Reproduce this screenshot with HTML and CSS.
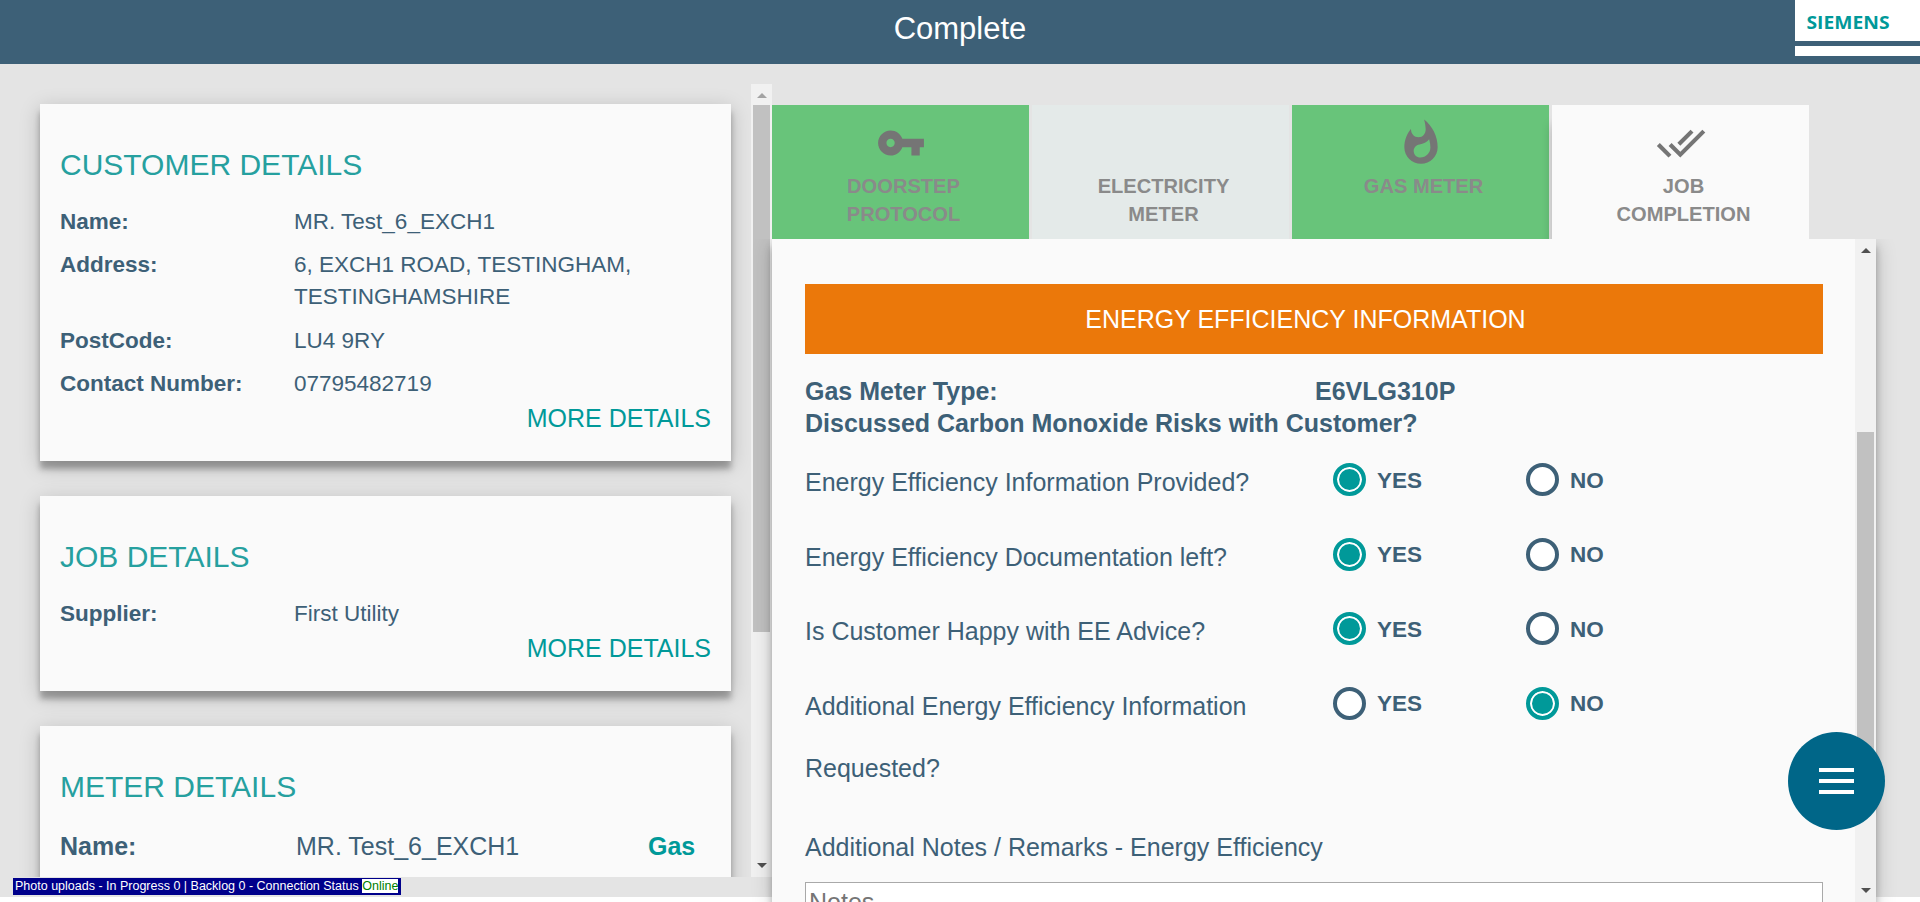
FILE: index.html
```html
<!DOCTYPE html>
<html lang="en">
<head>
<meta charset="utf-8">
<title>Complete</title>
<link rel="stylesheet" href="styles.css">
</head>
<body>
<header class="topbar">
  <h1 class="topbar-title">Complete</h1>
  <div class="brand">
    <div class="brand-name"><svg width="125" height="41" viewBox="0 0 125 41"><text class="brand-text" x="11.5" y="28.5" textLength="83" lengthAdjust="spacingAndGlyphs">SIEMENS</text></svg></div>
    <div class="brand-line"></div>
  </div>
</header>
<main class="workspace">
  <div class="left-pane">
    <div class="cards">
      <section class="card">
        <h2 class="card-title">CUSTOMER DETAILS</h2>
        <dl class="facts">
          <dt>Name:</dt><dd>MR. Test_6_EXCH1</dd>
          <dt>Address:</dt><dd>6, EXCH1 ROAD, TESTINGHAM, TESTINGHAMSHIRE</dd>
          <dt>PostCode:</dt><dd>LU4 9RY</dd>
          <dt>Contact Number:</dt><dd>07795482719</dd>
        </dl>
        <a class="more">MORE DETAILS</a>
      </section>
      <section class="card">
        <h2 class="card-title">JOB DETAILS</h2>
        <dl class="facts">
          <dt>Supplier:</dt><dd>First Utility</dd>
        </dl>
        <a class="more">MORE DETAILS</a>
      </section>
      <section class="card">
        <h2 class="card-title">METER DETAILS</h2>
        <div class="meter-row"><b>Name:</b><span>MR. Test_6_EXCH1</span><b class="fuel">Gas</b></div>
      </section>
    </div>
    <div class="scrollbar">
      <i class="arrow arrow-up arrow-muted"></i>
      <div class="thumb thumb-left"></div>
      <i class="arrow arrow-down"></i>
    </div>
  </div>
  <div class="right-pane">
    <nav class="tabs">
      <a class="tab tab-done">
        <svg class="tab-icon" viewBox="0 0 24 24"><path d="M12.65 10C11.83 7.67 9.61 6 7 6c-3.31 0-6 2.69-6 6s2.69 6 6 6c2.61 0 4.83-1.67 5.65-4H17v4h4v-4h2v-4H12.65zM7 14c-1.1 0-2-.9-2-2s.9-2 2-2 2 .9 2 2-.9 2-2 2z"/></svg>
        <span class="tab-label">DOORSTEP<br>PROTOCOL</span>
      </a>
      <a class="tab tab-off">
        <span class="tab-icon"></span>
        <span class="tab-label">ELECTRICITY<br>METER</span>
      </a>
      <a class="tab tab-done">
        <svg class="tab-icon" viewBox="0 0 24 24"><path d="M13.5.67s.74 2.65.74 4.8c0 2.06-1.35 3.73-3.41 3.73-2.07 0-3.63-1.67-3.63-3.73l.03-.36C5.21 7.51 4 10.62 4 14c0 4.42 3.58 8 8 8s8-3.58 8-8C20 8.61 17.41 3.8 13.5.67zM11.71 19c-1.78 0-3.22-1.4-3.22-3.14 0-1.62 1.05-2.76 2.81-3.12 1.77-.36 3.6-1.21 4.62-2.58.39 1.29.59 2.65.59 4.04 0 2.65-2.15 4.8-4.8 4.8z"/></svg>
        <span class="tab-label">GAS METER</span>
      </a>
      <a class="tab tab-current">
        <svg class="tab-icon" viewBox="0 0 24 24"><path d="M18 7l-1.41-1.41-6.34 6.34 1.41 1.41L18 7zm4.24-1.41L11.66 16.17 7.48 12l-1.41 1.41L11.66 19l12-12-1.42-1.41zM.41 13.41L6 19l1.41-1.41L1.83 12 .41 13.41z"/></svg>
        <span class="tab-label">JOB<br>COMPLETION</span>
      </a>
    </nav>
    <section class="panel">
      <div class="panel-body">
        <h2 class="banner">ENERGY EFFICIENCY INFORMATION</h2>
        <div class="meter-type"><span>Gas Meter Type:</span><span>E6VLG310P</span></div>
        <p class="subhead">Discussed Carbon Monoxide Risks with Customer?</p>
        <div class="question"><span>Energy Efficiency Information Provided?</span><span class="choice"><i class="radio radio-on"></i><b>YES</b></span><span class="choice"><i class="radio"></i><b>NO</b></span></div>
        <div class="question"><span>Energy Efficiency Documentation left?</span><span class="choice"><i class="radio radio-on"></i><b>YES</b></span><span class="choice"><i class="radio"></i><b>NO</b></span></div>
        <div class="question"><span>Is Customer Happy with EE Advice?</span><span class="choice"><i class="radio radio-on"></i><b>YES</b></span><span class="choice"><i class="radio"></i><b>NO</b></span></div>
        <div class="question question-tall"><span>Additional Energy Efficiency Information Requested?</span><span class="choice"><i class="radio"></i><b>YES</b></span><span class="choice"><i class="radio radio-on"></i><b>NO</b></span></div>
        <p class="notes-label">Additional Notes / Remarks - Energy Efficiency</p>
        <div class="notes">Notes</div>
      </div>
      <div class="scrollbar">
        <i class="arrow arrow-up"></i>
        <div class="thumb thumb-right"></div>
        <i class="arrow arrow-down"></i>
      </div>
    </section>
  </div>
</main>
<div class="status">Photo uploads - In Progress 0 | Backlog 0 - Connection Status <span class="online">Online</span></div>
<button class="fab" aria-label="Menu"><i></i><i></i><i></i></button>
</body>
</html>
```
FILE: styles.css
```css
* { box-sizing: border-box; }
body {
  margin: 0;
  height: 902px;
  overflow: hidden;
  background: #fff;
  color: #3d6077;
  font-family: "Liberation Sans", Arial, sans-serif;
  font-size: 22.5px;
}
h1, h2, p, dl, dd { margin: 0; font-weight: 400; }

.topbar {
  display: flex;
  justify-content: flex-end;
  height: 64px;
  padding-left: 125px;
  background: #3d6077;
}
.topbar-title { flex: 1; color: #fff; font-size: 31px; line-height: 57px; text-align: center; }
.brand { width: 125px; height: 56px; background: #fff; }
.brand-name { height: 41px; }
.brand-name svg { display: block; }
.brand-text { font-family: "Open Sans", "Noto Sans", sans-serif; font-weight: 700; font-size: 18px; fill: #099; }
.brand-line { height: 5px; background: #3d6077; }

.workspace { display: flex; height: 833px; background: #e4e4e4; }

.left-pane { display: flex; width: 772px; height: 813px; padding-top: 20px; }
.cards {
  display: flex;
  flex-direction: column;
  gap: 35px;
  width: 751px;
  padding: 20px 20px 0 40px;
  overflow: hidden;
}
.card {
  flex: none;
  padding: 43px 20px 26px;
  background: #fafafa;
  box-shadow: 0 8px 6px 0 rgba(0,0,0,.28), 0 5px 20px rgba(0,0,0,.2);
}
.card-title { height: 53px; color: #26a09f; font-size: 30px; line-height: 36px; }
.facts { display: grid; grid-template-columns: 234px 370px; row-gap: 11.33px; padding-top: 6px; line-height: 32px; }
.facts dt { font-weight: 700; }
.more { display: block; height: 33px; margin-top: 2px; color: #099; font-size: 25px; line-height: 33px; text-align: right; }
.meter-row { display: grid; grid-template-columns: 236px 352px auto; padding: 8px 0 40px; font-size: 25px; line-height: 32px; }
.fuel { color: #099; }

.scrollbar { display: flex; flex-direction: column; align-items: center; width: 21px; background: #f1f1f1; }
.arrow { width: 0; height: 0; border: 5px solid transparent; }
.arrow-up { margin: 4px 0 7px; border-bottom-color: #505050; }
.arrow-down { margin: auto 0 4px; border-top-color: #505050; }
.arrow-muted { border-bottom-color: #a3a3a3; }
.thumb { width: 17px; background: #c1c1c1; }
.thumb-left { height: 527px; }
.thumb-right { height: 348px; margin-top: 172px; }

.right-pane { width: 1104px; height: 838px; padding-top: 41px; }
.tabs { display: flex; gap: 3px; height: 134px; }
.tab { width: 257px; height: 134px; padding-top: 13px; color: #8a8a8a; text-align: center; }
.tab-done { background: #68c47a; }
.tab-off { background: #e4eae9; }
.tab-current { background: #fafafa; box-shadow: 0 20px 10px rgba(0,0,0,.22); clip-path: inset(0 0 0 -10px); }
.tab-icon { display: block; width: 50px; height: 50px; margin: 0 auto; fill: #757575; }
.tab-label { display: block; padding: 4px 0 0 6px; font-size: 20.1px; font-weight: 700; line-height: 28px; }

.panel {
  position: relative;
  display: flex;
  height: 663px;
  background: #fafafa;
  box-shadow: 0 8px 7px 0 rgba(0,0,0,.26), 0 5px 20px rgba(0,0,0,.2);
  clip-path: inset(0 -40px -40px -40px);
}
.panel-body { width: 1083px; height: 663px; padding: 45px 32px 0 33px; overflow: hidden; font-size: 25px; }
.banner { height: 70px; padding-right: 17px; background: #eb780a; color: #fff; font-size: 25px; line-height: 71px; text-align: center; }
.meter-type { display: grid; grid-template-columns: 510px auto; padding-top: 21px; font-weight: 700; line-height: 32px; }
.subhead { font-weight: 700; line-height: 32px; }
.question { display: grid; grid-template-columns: 528px 193px 193px; height: 74.5px; line-height: 62px; }
.question > :first-child { width: 480px; }
.subhead + .question { margin-top: 12px; }
.question-tall { height: 156px; }
.choice { display: flex; align-items: center; gap: 11px; height: 57px; font-size: 22.5px; }
.choice b { padding-top: 2px; }
.radio { width: 33px; height: 33px; border: 4px solid #3d6077; border-radius: 50%; background: #fff; }
.radio-on { border-color: #099; background: #099; box-shadow: inset 0 0 0 2px #fff; }
.notes-label { line-height: 32px; }
.notes { height: 60px; margin-top: 19px; padding: 3px; border: 1px solid #a9a9a9; background: #fff; color: #757575; line-height: 32px; }

.status {
  position: absolute;
  left: 13px;
  top: 878px;
  width: 388px;
  height: 17px;
  padding: 0 2px;
  background: #00008b;
  color: #fff;
  font-size: 12.5px;
  line-height: 15px;
  white-space: nowrap;
}
.online { display: inline-block; height: 14px; margin-top: 1px; background: #fff; color: #008000; line-height: 14px; }

.fab {
  position: absolute;
  left: 1788px;
  top: 732px;
  display: flex;
  flex-direction: column;
  align-items: center;
  justify-content: center;
  gap: 7px;
  width: 97px;
  height: 98px;
  padding: 0;
  border: 0;
  border-radius: 50%;
  background: #068;
}
.fab i { width: 35px; height: 4px; background: #fff; }
```
